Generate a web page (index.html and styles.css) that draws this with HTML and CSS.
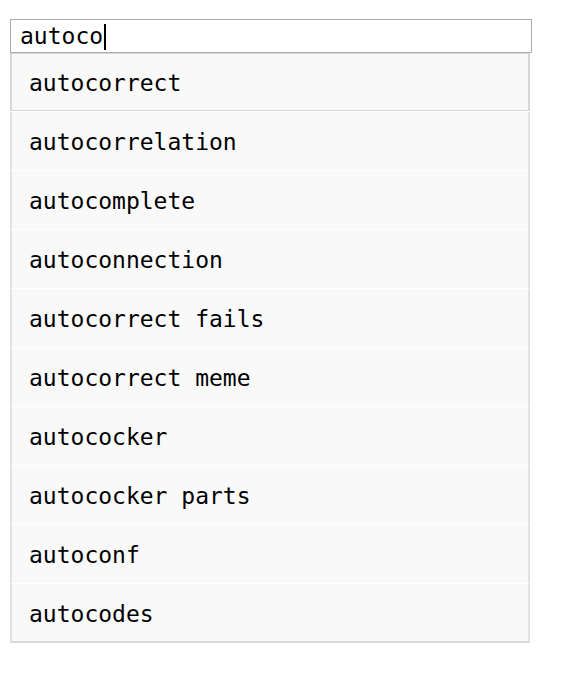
FILE: index.html
```html
<!DOCTYPE html>
<html>
<head>
<meta charset="utf-8">
<link rel="stylesheet" href="styles.css">
</head>
<body>
<div class="wrap">
  <div class="search"><span class="query">autoco</span><span class="caret"></span></div>
  <ul class="suggestions">
    <li class="item first">autocorrect</li>
    <li class="item">autocorrelation</li>
    <li class="item">autocomplete</li>
    <li class="item">autoconnection</li>
    <li class="item">autocorrect fails</li>
    <li class="item">autocorrect meme</li>
    <li class="item">autococker</li>
    <li class="item">autococker parts</li>
    <li class="item">autoconf</li>
    <li class="item last">autocodes</li>
  </ul>
</div>
</body>
</html>
```
FILE: styles.css
```css
html, body {
  margin: 0;
  padding: 0;
  background: #fff;
}
.wrap {
  padding: 19px 0 0 10px;
  font-family: "DejaVu Sans Mono", "Liberation Mono", monospace;
  font-size: 23px;
  color: #000;
}
.search {
  box-sizing: border-box;
  width: 522px;
  height: 34px;
  border: 1px solid #ababab;
  display: flex;
  align-items: center;
  padding-left: 9px;
  padding-top: 1px;
  line-height: 1;
}
.caret {
  display: inline-block;
  width: 2px;
  height: 26px;
  background: #000;
  margin-left: 1px;
}
.suggestions {
  list-style: none;
  margin: 0;
  padding: 0;
  width: 520px;
  box-sizing: border-box;
}
.item {
  box-sizing: border-box;
  height: 59px;
  background: #f9f9f9;
  border-left: 2px solid #e2e2e2;
  border-right: 2px solid #e2e2e2;
  border-bottom: 1px solid #ffffff;
  padding-left: 17px;
  padding-top: 2px;
  display: flex;
  align-items: center;
}
.item.first {
  border: 1px solid #d6d6d6;
  border-left-width: 2px;
  border-right-width: 2px;
  box-shadow: 0 1px 0 #fff;
  margin-bottom: 1px;
  height: 58px;
}
.item.last {
  border-bottom: 2px solid #d9d9d9;
}
```
